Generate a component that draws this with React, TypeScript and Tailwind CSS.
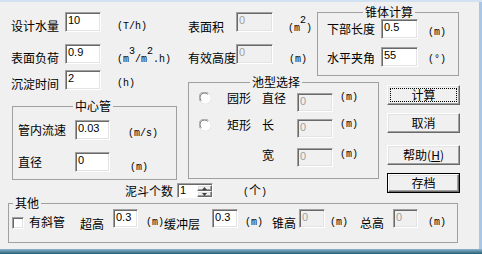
import React from 'react';

const cjk = "font-['Noto_Sans_CJK_SC','Noto_Sans',sans-serif]";

type P = { className?: string; children?: React.ReactNode };

function Label({ text, className = '' }: { text: string; className?: string }) {
  return <span className={`shrink-0 whitespace-nowrap text-[12px] leading-[14px] ${className}`}>{text}</span>;
}

function Unit({ children, className = '' }: P) {
  return (
    <span className={`shrink-0 whitespace-nowrap font-['Liberation_Mono','Noto_Sans_CJK_SC',monospace] text-[10px] leading-[14px] ${className}`}>
      {children}
    </span>
  );
}

function Sup({ children }: P) {
  return <span className="align-[8px] leading-[0px] text-[10px]">{children}</span>;
}

function Field({ value, disabled = false, className = '' }: { value: string; disabled?: boolean; className?: string }) {
  return (
    <div
      className={`shrink-0 border border-t-[#a0a0a0] border-l-[#a0a0a0] border-r-white border-b-white shadow-[inset_1px_1px_0_#696969,inset_-1px_-1px_0_#e3e3e3] pl-[2px] font-['Liberation_Sans',sans-serif] text-[11px] leading-[14px] ${disabled ? 'bg-[#f0f0f0] text-[#a0a0a0]' : 'bg-white text-black'} ${className}`}
    >
      {value}
    </div>
  );
}

function Group({ title, legendClass = '', className = '', children }: { title: string; legendClass?: string; className?: string; children?: React.ReactNode }) {
  return (
    <fieldset className={`shrink-0 border border-[#a0a0a0] ${className}`}>
      <legend className={`px-[2px] text-[12px] leading-[14px] ${legendClass}`}>{title}</legend>
      {children}
    </fieldset>
  );
}

function Raised({ children, className = '' }: P) {
  return (
    <div className={`flex bg-[#f0f0f0] border border-t-white border-l-white border-r-[#696969] border-b-[#696969] shadow-[inset_-1px_-1px_0_#a0a0a0,inset_1px_1px_0_#e3e3e3] ${className}`}>
      {children}
    </div>
  );
}

function Btn({ children, focus = false, isDefault = false, className = '' }: P & { focus?: boolean; isDefault?: boolean }) {
  const label = <span className="text-[12px] leading-[14px]">{children}</span>;
  if (isDefault) {
    return (
      <div className={`flex w-[73px] h-[20px] shrink-0 border border-black ${className}`}>
        <Raised className="flex-1 items-center justify-center">{label}</Raised>
      </div>
    );
  }
  return (
    <Raised className={`w-[73px] h-[20px] shrink-0 ${focus ? '' : 'items-center justify-center'} ${className}`}>
      {focus ? (
        <div className="flex-1 m-[2px] border border-dotted border-black flex items-center justify-center">{label}</div>
      ) : (
        label
      )}
    </Raised>
  );
}

function Radio({ className = '' }: P) {
  return (
    <svg width="12" height="12" viewBox="0 0 12 12" className={`shrink-0 ${className}`}>
      <circle cx="6" cy="6" r="5.5" fill="#ffffff" stroke="#ffffff" />
      <path d="M1.5 9.5 A5 5 0 0 1 9.5 1.5" fill="none" stroke="#a0a0a0" strokeWidth="1" />
      <path d="M2.3 8.7 A4 4 0 0 1 8.7 2.3" fill="none" stroke="#696969" strokeWidth="1" />
      <path d="M10.5 2.5 A5 5 0 0 1 2.5 10.5" fill="none" stroke="#e3e3e3" strokeWidth="1" />
    </svg>
  );
}

function Spinner({ className = '' }: P) {
  return (
    <div className={`flex w-[36px] h-[15px] shrink-0 bg-white border border-t-[#a0a0a0] border-l-[#a0a0a0] border-r-white border-b-white shadow-[inset_1px_1px_0_#696969] ${className}`}>
      <span className="flex-1 pl-[2px] font-['Liberation_Sans',sans-serif] text-[11px] leading-[13px]">1</span>
      <div className="w-[15px] flex flex-col mt-[1px] mb-[0px]">
        <Raised className="flex-1 items-center justify-center">
          <svg width="5" height="3" viewBox="0 0 5 3">
            <path d="M0 3 L2.5 0 L5 3 Z" fill="#404040" />
          </svg>
        </Raised>
        <Raised className="flex-1 items-center justify-center">
          <svg width="5" height="3" viewBox="0 0 5 3">
            <path d="M0 0 L2.5 3 L5 0 Z" fill="#404040" />
          </svg>
        </Raised>
      </div>
    </div>
  );
}

export default function App() {
  return (
    <div className={`w-[482px] h-[254px] bg-[#f0f0f0] flex flex-col overflow-hidden text-black ${cjk}`}>
      <div className="h-[2px] shrink-0 bg-[#d3e2f3]" />
      <div className="flex flex-1 min-h-0">
        <div className="flex-1 flex flex-col">
          <div className="flex h-[178px] shrink-0">
            {/* left column */}
            <div className="w-[180px] shrink-0 flex flex-col">
              <div className="flex items-start h-[20px] mt-[10px] shrink-0">
                <Label text="设计水量" className="ml-[11px] w-[54px] mt-[7px]" />
                <Field value="10" className="w-[36px] h-[20px]" />
                <Unit className="ml-[16px] mt-[8px]">(T/h)</Unit>
              </div>
              <div className="flex items-start h-[20px] mt-[12px] shrink-0">
                <Label text="表面负荷" className="ml-[11px] w-[54px] mt-[7px]" />
                <Field value="0.9" className="w-[36px] h-[20px]" />
                <Unit className="ml-[16px] mt-[8px]">
                  (m<Sup>3</Sup>/m<Sup>2</Sup>.h)
                </Unit>
              </div>
              <div className="flex items-start h-[20px] mt-[6px] shrink-0">
                <Label text="沉淀时间" className="ml-[11px] w-[54px] mt-[7px]" />
                <Field value="2" className="w-[36px] h-[20px]" />
                <Unit className="ml-[16px] mt-[7px]">(h)</Unit>
              </div>

              <Group title="中心管" className="mt-[9px] ml-[12px] w-[165px] h-[81px]" legendClass="ml-[60px]">
                <div className="flex items-start h-[20px] mt-[7px]">
                  <Label text="管内流速" className="ml-[5px] w-[57px] mt-[3px]" />
                  <Field value="0.03" className="w-[35px] h-[20px]" />
                  <Unit className="ml-[18px] mt-[7px]">(m/s)</Unit>
                </div>
                <div className="flex items-start h-[20px] mt-[12px]">
                  <Label text="直径" className="ml-[5px] w-[57px] mt-[3px]" />
                  <Field value="0" className="w-[35px] h-[20px]" />
                  <Unit className="ml-[20px] mt-[9px]">(m)</Unit>
                </div>
              </Group>
            </div>

            {/* right part */}
            <div className="flex-1 flex flex-col">
              <div className="flex h-[73px] shrink-0">
                <div className="w-[137px] shrink-0 flex flex-col">
                  <div className="flex items-start h-[20px] mt-[10px]">
                    <Label text="表面积" className="ml-[8px] w-[48px] mt-[8px]" />
                    <Field value="0" disabled className="w-[37px] h-[20px]" />
                    <Unit className="ml-[15px] mt-[9px]">
                      (m<Sup>2</Sup>)
                    </Unit>
                  </div>
                  <div className="flex items-start h-[20px] mt-[12px]">
                    <Label text="有效高度" className="ml-[8px] w-[48px] mt-[7px]" />
                    <Field value="0" disabled className="w-[37px] h-[20px]" />
                    <Unit className="ml-[16px] mt-[9px]">(m)</Unit>
                  </div>
                </div>

                <Group title="锥体计算" className="mt-[3px] w-[142px] h-[71px]" legendClass="ml-[45px]">
                  <div className="flex items-start h-[20px]">
                    <Label text="下部长度" className="ml-[9px] w-[54px] mt-[3px]" />
                    <Field value="0.5" className="w-[37px] h-[20px]" />
                    <Unit className="ml-[10px] mt-[7px]">(m)</Unit>
                  </div>
                  <div className="flex items-start h-[20px] mt-[8px]">
                    <Label text="水平夹角" className="ml-[9px] w-[54px] mt-[4px]" />
                    <Field value="55" className="w-[37px] h-[20px]" />
                    <Unit className="ml-[10px] mt-[6px]">(°)</Unit>
                  </div>
                </Group>
              </div>

              <div className="flex items-start h-[105px] shrink-0">
                <Group title="池型选择" className="ml-[8px] w-[191px] h-[104px]" legendClass="ml-[61px]">
                  <div className="flex items-start h-[19px] mt-[4px]">
                    <Radio className="ml-[10px] mt-[-1px]" />
                    <Label text="园形" className="ml-[16px] w-[24px] mt-[-2px]" />
                    <Label text="直径" className="ml-[11px] w-[24px] mt-[-2px]" />
                    <Field value="0" disabled className="ml-[11px] w-[36px] h-[19px]" />
                    <Unit className="ml-[7px] mt-[-2px]">(m)</Unit>
                  </div>
                  <div className="flex items-start h-[19px] mt-[7px]">
                    <Radio className="ml-[10px]" />
                    <Label text="矩形" className="ml-[16px] w-[24px] mt-[-1px]" />
                    <Label text="长" className="ml-[11px] w-[24px] mt-[-1px]" />
                    <Field value="0" disabled className="ml-[11px] w-[36px] h-[19px]" />
                    <Unit className="ml-[7px] mt-[-1px]">(m)</Unit>
                  </div>
                  <div className="flex items-start h-[19px] mt-[10px]">
                    <Label text="宽" className="ml-[73px] w-[24px] mt-[0px]" />
                    <Field value="0" disabled className="ml-[11px] w-[36px] h-[19px]" />
                    <Unit className="ml-[7px] mt-[0px]">(m)</Unit>
                  </div>
                </Group>

                <div className="ml-[8px] w-[73px] flex flex-col shrink-0">
                  <Btn focus className="mt-[10px]">计算</Btn>
                  <Btn className="mt-[8px]">取消</Btn>
                  <Btn className="mt-[12px]">
                    帮助(<u>H</u>)
                  </Btn>
                  <Btn isDefault className="mt-[8px]">存档</Btn>
                </div>
              </div>
            </div>
          </div>

          {/* 泥斗 row */}
          <div className="flex items-start h-[15px] mt-[3px] shrink-0">
            <Label text="泥斗个数" className="ml-[125px] w-[48px] mt-[1px]" />
            <Spinner className="ml-[4px]" />
            <Unit className="ml-[30px] mt-[2px]">
              (<span className="text-[12px]">个</span>)
            </Unit>
          </div>

          <Group title="其他" className="mt-[-2px] ml-[8px] w-[450px] h-[47px]" legendClass="ml-[4px]">
            <div className="flex items-start h-[19px] mt-[-1px]">
              <div className="ml-[3px] mt-[8px] w-[12px] h-[12px] shrink-0 bg-white border border-t-[#a0a0a0] border-l-[#a0a0a0] border-r-white border-b-white shadow-[inset_1px_1px_0_#696969,inset_-1px_-1px_0_#e3e3e3]" />
              <Label text="有斜管" className="ml-[5px] w-[36px] mt-[6px]" />
              <Label text="超高" className="ml-[15px] w-[24px] mt-[8px]" />
              <Field value="0.3" className="ml-[9px] w-[25px] h-[19px]" />
              <Unit className="ml-[8px] mt-[7px]">(m)</Unit>
              <Label text="缓冲层" className="ml-[0px] w-[36px] mt-[8px]" />
              <Field value="0.3" className="ml-[12px] w-[26px] h-[19px]" />
              <Unit className="ml-[7px] mt-[7px]">(m)</Unit>
              <Label text="锥高" className="ml-[9px] w-[24px] mt-[7px]" />
              <Field value="0" disabled className="ml-[3px] w-[26px] h-[19px]" />
              <Unit className="ml-[5px] mt-[7px]">(m)</Unit>
              <Label text="总高" className="ml-[12px] w-[24px] mt-[7px]" />
              <Field value="0" disabled className="ml-[9px] w-[25px] h-[19px]" />
              <Unit className="ml-[10px] mt-[7px]">(m)</Unit>
            </div>
          </Group>
        </div>
        <div className="w-[3px] shrink-0 bg-[#a9c6e6]" />
      </div>
      <div className="h-[5px] shrink-0 bg-linear-to-b from-[#8db6d2] to-[#245f74]" />
    </div>
  );
}
